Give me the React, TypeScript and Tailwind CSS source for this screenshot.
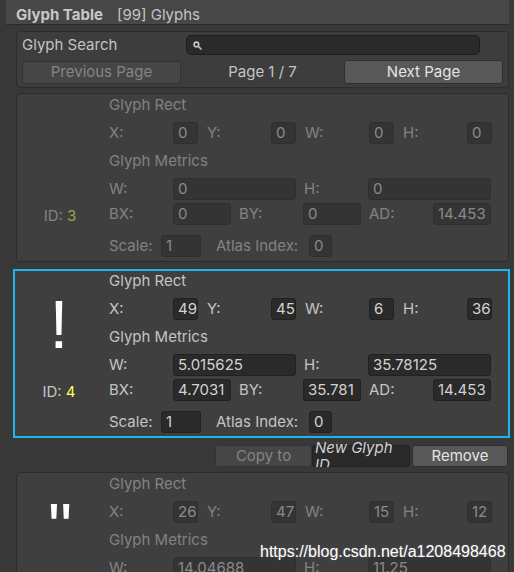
import React from "react";

type Group = { label: string; lw: string; value: string; fw: string };

function Field({ value, fw }: { value: string; fw: string }) {
  return (
    <div
      className={`${fw} h-[22px] shrink-0 overflow-hidden whitespace-nowrap rounded-[3px] border border-[#212121] bg-[#2a2a2a] pl-[4px] text-[15px] leading-[20px] text-[#d2d2d2]`}
    >
      {value}
    </div>
  );
}

function FieldRow({ groups, gap }: { groups: Group[]; gap: string }) {
  return (
    <div className={`flex h-[22px] items-center ${gap}`}>
      {groups.map((g, i) => (
        <div key={i} className="flex items-center">
          <div className={`${g.lw} shrink-0 text-[15px] leading-[22px] text-[#c4c4c4]`}>{g.label}</div>
          <Field value={g.value} fw={g.fw} />
        </div>
      ))}
    </div>
  );
}

interface GlyphData {
  id: number;
  glyph: string;
  rect: [string, string, string, string];
  metrics: [string, string, string, string, string];
  scale: string;
  atlas: string;
}

function GlyphPanel({ data, selected }: { data: GlyphData; selected?: boolean }) {
  const dim = selected ? "" : "opacity-50";
  return (
    <div
      className={
        selected
          ? "-ml-[3px] -mr-[1px] flex border-2 border-[#1eb5ef] bg-[#3f3f3f] pb-[3px]"
          : "flex rounded-[4px] border border-[#2c2c2c] bg-[#3f3f3f] pt-[1px] pb-[4px]"
      }
    >
      <div className={`${selected ? "w-[94px]" : "w-[92px]"} flex shrink-0 flex-col items-center pr-[6px]`}>
        <div className="mt-[18px] flex h-[70px] items-center justify-center font-['Liberation_Sans',Arial,sans-serif] text-[68px] leading-none text-white">
          {data.glyph}
        </div>
        <div className={`mt-[23px] h-[20px] text-[15px] leading-[20px] ${dim}`}>
          <span className="text-[#c4c4c4]">ID: </span>
          <span className="text-[#ffff5c]">{data.id}</span>
        </div>
      </div>
      <div className={`flex flex-col ${dim}`}>
        <div className="h-[20px] text-[15px] leading-[20px] text-[#c4c4c4]">Glyph Rect</div>
        <div className="mt-[7px]">
          <FieldRow
            gap="gap-[9px]"
            groups={[
              { label: "X:", lw: "w-[64px]", value: data.rect[0], fw: "w-[25px]" },
              { label: "Y:", lw: "w-[64px]", value: data.rect[1], fw: "w-[25px]" },
              { label: "W:", lw: "w-[64px]", value: data.rect[2], fw: "w-[25px]" },
              { label: "H:", lw: "w-[64px]", value: data.rect[3], fw: "w-[25px]" },
            ]}
          />
        </div>
        <div className="mt-[7px] h-[20px] text-[15px] leading-[20px] text-[#c4c4c4]">Glyph Metrics</div>
        <div className="mt-[7px]">
          <FieldRow
            gap="gap-[8px]"
            groups={[
              { label: "W:", lw: "w-[64px]", value: data.metrics[0], fw: "w-[123px]" },
              { label: "H:", lw: "w-[64px]", value: data.metrics[1], fw: "w-[123px]" },
            ]}
          />
        </div>
        <div className="mt-[3px]">
          <FieldRow
            gap="gap-[8px]"
            groups={[
              { label: "BX:", lw: "w-[64px]", value: data.metrics[2], fw: "w-[58px]" },
              { label: "BY:", lw: "w-[64px]", value: data.metrics[3], fw: "w-[58px]" },
              { label: "AD:", lw: "w-[64px]", value: data.metrics[4], fw: "w-[58px]" },
            ]}
          />
        </div>
        <div className="mt-[10px]">
          <FieldRow
            gap="gap-[15px]"
            groups={[
              { label: "Scale:", lw: "w-[52px]", value: data.scale, fw: "w-[40px]" },
              { label: "Atlas Index:", lw: "w-[93px]", value: data.atlas, fw: "w-[23px]" },
            ]}
          />
        </div>
      </div>
    </div>
  );
}

const glyphs: GlyphData[] = [
  { id: 3, glyph: "", rect: ["0", "0", "0", "0"], metrics: ["0", "0", "0", "0", "14.453"], scale: "1", atlas: "0" },
  { id: 4, glyph: "!", rect: ["49", "45", "6", "36"], metrics: ["5.015625", "35.78125", "4.7031", "35.781", "14.453"], scale: "1", atlas: "0" },
  { id: 5, glyph: "\"", rect: ["26", "47", "15", "12"], metrics: ["14.04688", "11.25", "0", "0", "14.453"], scale: "1", atlas: "0" },
];

function SearchIcon() {
  return (
    <svg width="9" height="9" viewBox="0 0 9 9" fill="none" stroke="#c8c8c8" strokeWidth="1.6">
      <circle cx="3.4" cy="3.4" r="2.3" />
      <path d="M5.2 5.2 L8 8" strokeLinecap="round" />
    </svg>
  );
}

export default function App() {
  return (
    <div className="relative h-[572px] w-[514px] overflow-hidden bg-[#383838] font-['Inter','Noto_Sans',sans-serif] text-[15px]">
      {/* header */}
      <div className="ml-[6px] mr-[5px] flex h-[25px] items-center gap-[14px] border-b border-[#2a2a2a] bg-[#474747] pl-[10px] pt-[7px] text-[15px]">
        <span className="font-bold text-[#c8c8c8]">Glyph Table</span>
        <span className="text-[#c4c4c4]">[99] Glyphs</span>
      </div>

      <div className="flex flex-col pl-[16px] pr-[5px]">
        {/* search + paging */}
        <div className="mt-[6px] flex flex-col gap-[5px] rounded-[4px] border border-[#2c2c2c] bg-[#3d3d3d] px-[5px] pt-[3px] pb-[3px]">
          <div className="flex h-[20px] items-center">
            <div className="w-[164px] text-[#c4c4c4]">Glyph Search</div>
            <div className="flex h-[20px] w-[294px] items-center rounded-[5px] border border-[#1e1e1e] bg-[#2a2a2a] pl-[6px]">
              <SearchIcon />
            </div>
          </div>
          <div className="flex h-[24px] items-center">
            <div className="flex h-[23px] w-[159px] items-center justify-center rounded-[3px] border border-[#333333] bg-[#464646] text-[#848484]">
              Previous Page
            </div>
            <div className="flex-1 text-center text-[#c4c4c4]">Page 1 / 7</div>
            <div className="flex h-[24px] w-[159px] items-center justify-center rounded-[3px] border border-[#2e2e2e] bg-[#585858] text-[#e4e4e4]">
              Next Page
            </div>
          </div>
        </div>

        <div className="mt-[5px]">
          <GlyphPanel data={glyphs[0]} />
        </div>
        <div className="mt-[7px]">
          <GlyphPanel data={glyphs[1]} selected />
        </div>

        {/* copy / remove */}
        <div className="mr-[1px] mt-[7px] flex h-[22px] items-end justify-end">
          <div className="flex h-[22px] w-[97px] items-center justify-center rounded-[3px] border border-[#333333] bg-[#464646] text-[#848484]">
            Copy to
          </div>
          <div className="-mt-[8px] flex h-[30px] w-[98px] flex-col justify-end overflow-hidden">
            <div className="h-[22px] rounded-[3px] border border-[#212121] bg-[#2a2a2a] pl-[2px]">
              <div className="-mt-[7px] text-[15px] italic leading-[17px] text-[#d2d2d2]">
                New Glyph
                <br />
                ID
              </div>
            </div>
          </div>
          <div className="ml-[2px] flex h-[22px] w-[96px] items-center justify-center rounded-[3px] border border-[#2e2e2e] bg-[#585858] text-[#e4e4e4]">
            Remove
          </div>
        </div>

        <div className="mt-[5px]">
          <GlyphPanel data={glyphs[2]} />
        </div>
      </div>

      <div className="absolute left-[260px] top-[543px] font-['Liberation_Sans',Arial,sans-serif] text-[16px] leading-[18px] text-white [text-shadow:0_0_2px_#666]">
        https://blog.csdn.net/a1208498468
      </div>
    </div>
  );
}
